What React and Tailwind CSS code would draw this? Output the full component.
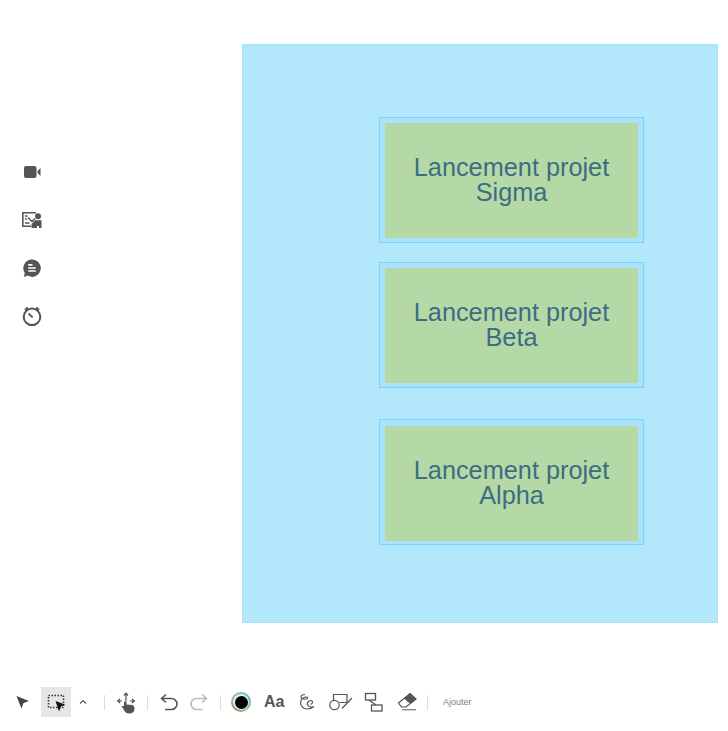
const CARDS = [
    { title: 'Sigma', className: 'mt-[72px] pt-[5px]' },
    { title: 'Beta', className: 'mt-[19px] pt-[5px]' },
    { title: 'Alpha', className: 'mt-[31px] pt-[6px]' },
];

function Icon({ w = 24, h = 24, children }) {
    return (
        <svg width={w} height={h} viewBox={`0 0 ${w} ${h}`} fill="none" stroke="#555" strokeWidth="1.4" className="shrink-0">
            {children}
        </svg>
    );
}

function Separator({ className }) {
    return <div className={`h-[15px] w-px bg-[#dedede] ${className}`} />;
}

function Card({ title, className }) {
    return (
        <div className={`${className} box-border h-[126px] w-[265px] border border-[#78d4fb] bg-[#abe2f9] pl-[5px]`}>
            <div className="flex h-[115px] w-[253px] items-center justify-center bg-[#b5d9a6] pb-[2px] text-center text-[25.3px] leading-[25px] text-[#3c6d82]">
                <p className="w-[210px]">Lancement projet {title}</p>
            </div>
        </div>
    );
}

export default function App() {
    return (
        <div className="flex h-[731px] w-[728px] flex-col overflow-hidden bg-white font-['Liberation_Sans',sans-serif]">
            <div className="flex h-[687px] items-start">
                {/* Side rail */}
                <aside className="flex w-[242px] flex-col gap-[24px] pl-[20px] pt-[160px]">
                    <Icon>
                        <rect x="4" y="6" width="12.5" height="12" rx="2" fill="#555" stroke="none" />
                        <path d="M17.5 11 L20.5 8 V16 L17.5 13 Z" fill="#555" stroke="none" />
                    </Icon>
                    <Icon>
                        <path d="M16 4.8 H2.8 V18.2 H11" strokeWidth="1.6" />
                        <path d="M5 8 H7.5 M5 11 H7 M5 15 H9.5 M8 9.5 L12 13.5 L15 10.5" strokeWidth="1.5" />
                        <circle cx="18" cy="8.2" r="3" fill="#555" stroke="none" />
                        <path d="M11.5 20 V16 L15 12.2 H21.5 V20 H19 V18 H17 V20 Z" fill="#555" stroke="none" />
                    </Icon>
                    <Icon>
                        <path d="M12 3.5 A8.7 8.7 0 1 1 7.5 19.6 L3.8 21 L4.8 17 A8.7 8.7 0 0 1 12 3.5 Z" fill="#555" stroke="none" />
                        <path d="M8.2 8.8 H12.5 M8.2 12 H15.8 M8.2 15 H15.8" stroke="#fff" strokeWidth="1.7" />
                    </Icon>
                    <Icon>
                        <circle cx="12" cy="12.8" r="8.3" strokeWidth="2" />
                        <path d="M5 6 L7.8 3.6 M19 6 L16.2 3.6" strokeWidth="2" />
                        <path d="M8.5 9.5 L12 12.8" strokeWidth="1.8" />
                        <circle cx="12" cy="12.8" r="1" fill="#555" stroke="none" />
                    </Icon>
                </aside>

                {/* Canvas */}
                <main className="mt-[44px] box-border flex h-[579px] w-[476px] flex-col border border-[#a5e3f8] bg-[#b3e7fb] pl-[136px]">
                    {CARDS.map((card) => (
                        <Card key={card.title} {...card} />
                    ))}
                </main>
            </div>

            {/* Toolbar */}
            <footer className="flex h-[30px] items-center pl-[11px]">
                <Icon>
                    <path d="M5.5 6 L18 11 L12.5 13 L10.5 18.5 Z" fill="#444" stroke="none" />
                </Icon>
                <div className="ml-[6px] flex h-[30px] w-[30px] items-center justify-center bg-[#e6e6e6]">
                    <Icon>
                        <rect x="4.5" y="5.5" width="15" height="12" stroke="#333" strokeWidth="1.6" strokeDasharray="1.5 1.5" />
                        <path d="M11.5 11 L21 14.5 L17 16.5 L15 21.5 Z" fill="#111" stroke="none" />
                    </Icon>
                </div>
                <div className="ml-[6px] flex w-[12px] justify-center">
                    <Icon w={8} h={6}>
                        <path d="M1 4.5 L4 1.5 L7 4.5" strokeWidth="1.1" />
                    </Icon>
                </div>
                <Separator className="ml-[15px] mr-[9px]" />
                <Icon>
                    <path d="M12 4 V11 M10 5.5 L12 3.2 L14 5.5 M4 11 H8 M6 9 L3.6 11 L6 13 M16 11 H20 M18 9 L20.4 11 L18 13" strokeWidth="1.2" />
                    <path d="M10 11.5 H12.5 V14.5 L18.5 15 Q20.5 15.5 20.5 18.5 Q20.5 23.5 15 23.5 Q11.5 23.5 10 20 L7.5 16 L10 16 Z" fill="#555" stroke="none" />
                </Icon>
                <Separator className="ml-[9px] mr-[9px]" />
                <Icon>
                    <path d="M9 4.5 L4.5 8.5 L9 12.5 M4.5 8.5 H14.5 A5.5 5.5 0 0 1 14.5 19.5 H8" strokeWidth="1.6" />
                </Icon>
                <div className="ml-[6px]">
                    <Icon>
                        <path d="M15 4.5 L19.5 8.5 L15 12.5 M19.5 8.5 H9.5 A5.5 5.5 0 0 0 9.5 19.5 H16" stroke="#bbb" strokeWidth="1.6" />
                    </Icon>
                </div>
                <Separator className="ml-[9px]" />
                <div className="ml-[10px] flex h-[20px] w-[20px] items-center justify-center rounded-full bg-[conic-gradient(#6fc4d2,#5cb8c0,#9cc48c,#8c9070,#a0b890,#6fc4d2)]">
                    <div className="flex h-[16px] w-[16px] items-center justify-center rounded-full bg-[#e8f0ea]">
                        <div className="h-[13px] w-[13px] rounded-full bg-black" />
                    </div>
                </div>
                <span className="ml-[13px] w-[21px] text-[16px] font-bold leading-none text-[#555]">Aa</span>
                <div className="ml-[10px]">
                    <Icon>
                        <path d="M10 4.5 C5.5 4.5 4.5 8 8 9 C12 10 14 7.5 12 7 C7 6.5 4 12 6.5 16 C9 20 15 20 19 16.5 C14 18.5 10.5 14.5 13.5 11.5 C16.5 9 20 12.5 15.5 14.5" strokeWidth="1.1" />
                    </Icon>
                </div>
                <div className="ml-[10px]">
                    <Icon>
                        <path d="M4.5 10 V4.5 H18 V12.5 H10.5" strokeWidth="1.2" />
                        <circle cx="5.5" cy="15" r="4.7" strokeWidth="1.2" />
                        <path d="M13 18.5 L23 8" strokeWidth="1.2" />
                    </Icon>
                </div>
                <div className="ml-[8px]">
                    <Icon>
                        <rect x="4.5" y="3.5" width="10" height="6.5" strokeWidth="1.3" />
                        <rect x="10.5" y="15" width="10.5" height="6" strokeWidth="1.3" />
                        <path d="M8 10 L15 15" strokeWidth="1.3" />
                    </Icon>
                </div>
                <div className="ml-[10px]">
                    <Icon>
                        <path d="M3.5 13 L15 3.5 L21 9 L11 17 H6.5 Z" strokeWidth="1.2" />
                        <path d="M9.5 8.5 L15 3.5 L21 9 L15.5 13.5 Z" fill="#555" strokeWidth="1" />
                        <path d="M7 19.7 H21" stroke="#888" strokeWidth="1.4" />
                    </Icon>
                </div>
                <Separator className="ml-[8px]" />
                <span className="ml-[15px] text-[9px] leading-none text-[#808080]">Ajouter</span>
            </footer>
        </div>
    );
}
